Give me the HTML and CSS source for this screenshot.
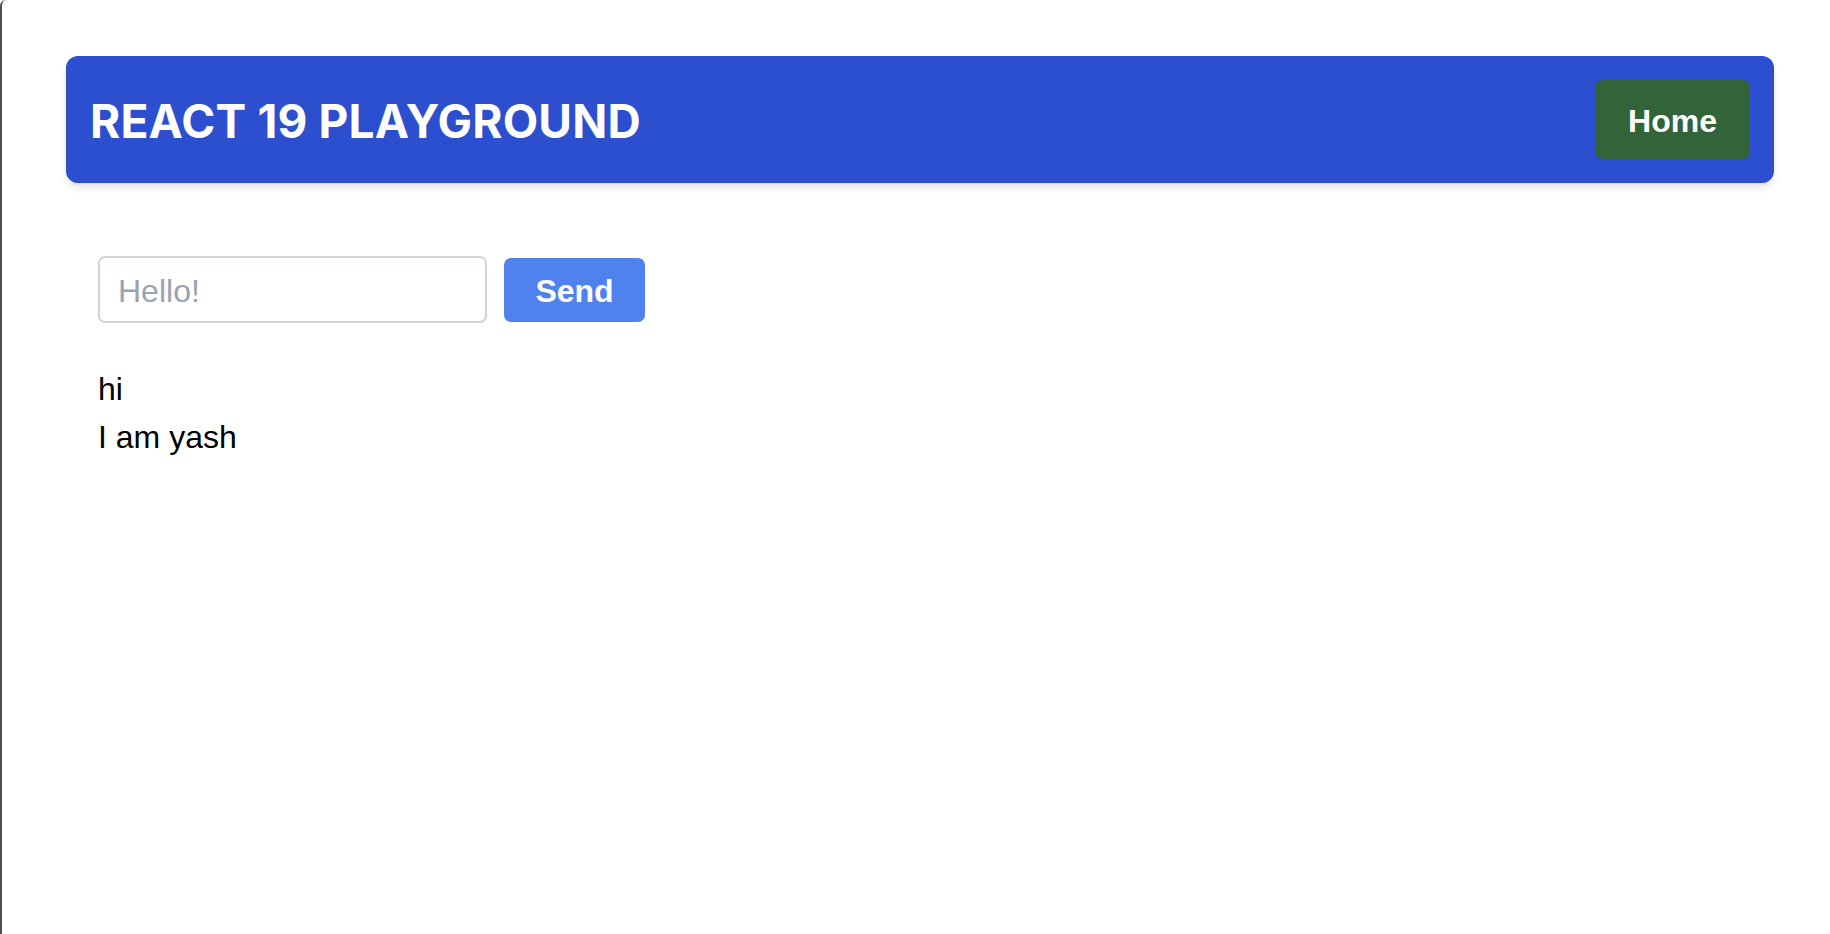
FILE: index.html
```html
<!DOCTYPE html>
<html lang="en">
<head>
<meta charset="utf-8">
<title>React 19 Playground</title>
<link rel="stylesheet" href="styles.css">
</head>
<body>
<div class="frame">
  <header class="navbar">
    <h1 class="brand">REACT 19 PLAYGROUND</h1>
    <a class="home-btn" href="#">Home</a>
  </header>
  <main class="content">
    <form class="send-form">
      <input class="msg-input" type="text" placeholder="Hello!">
      <button class="send-btn" type="button">Send</button>
    </form>
    <ul class="messages">
      <li>hi</li>
      <li>I am yash</li>
    </ul>
  </main>
</div>
</body>
</html>
```
FILE: styles.css
```css
html, body {
  margin: 0;
  padding: 0;
  height: 100%;
  background: #ffffff;
}
body {
  font-family: "Liberation Sans", Arial, sans-serif;
}
.frame {
  box-sizing: border-box;
  min-height: 100%;
  border-left: 2px solid #4b4b50;
  border-top-left-radius: 6px;
  padding: 56px 56px 0 64px;
}
.navbar {
  display: flex;
  align-items: center;
  justify-content: space-between;
  background: #2b4fcf;
  border-radius: 12px;
  padding: 24px;
  box-shadow: 0 6px 10px -2px rgba(0, 0, 0, 0.12), 0 2px 4px -2px rgba(0, 0, 0, 0.08);
}
.brand {
  margin: 0;
  padding-top: 2px;
  font-family: Inter, "Liberation Sans", sans-serif;
  font-weight: 700;
  font-size: 46px;
  letter-spacing: 0.2px;
  color: #ffffff;
  line-height: 1;
}
.home-btn {
  box-sizing: border-box;
  display: flex;
  align-items: center;
  justify-content: center;
  width: 155px;
  height: 79px;
  padding-top: 4px;
  background: #336339;
  border-radius: 7px;
  color: #ffffff;
  font-weight: 700;
  font-size: 32px;
  text-decoration: none;
}
.content {
  padding: 73px 32px 0 32px;
}
.send-form {
  display: flex;
  align-items: center;
  gap: 17px;
  margin: 0;
}
.msg-input {
  box-sizing: border-box;
  width: 389px;
  height: 67px;
  border: 2px solid #d1d5db;
  border-radius: 7px;
  padding: 4px 18px 0 18px;
  font-family: "Liberation Sans", Arial, sans-serif;
  font-size: 32px;
  color: #111;
  outline: none;
}
.msg-input::placeholder {
  color: #9ca3af;
}
.send-btn {
  box-sizing: border-box;
  width: 141px;
  height: 64px;
  padding: 4px 0 0 0;
  border: none;
  border-radius: 7px;
  background: #4f82ee;
  color: #ffffff;
  font-family: "Liberation Sans", Arial, sans-serif;
  font-weight: 700;
  font-size: 32px;
  cursor: pointer;
}
.messages {
  list-style: none;
  margin: 42px 0 0 0;
  padding: 0;
  font-size: 32px;
  line-height: 48px;
  color: #000;
}
```
